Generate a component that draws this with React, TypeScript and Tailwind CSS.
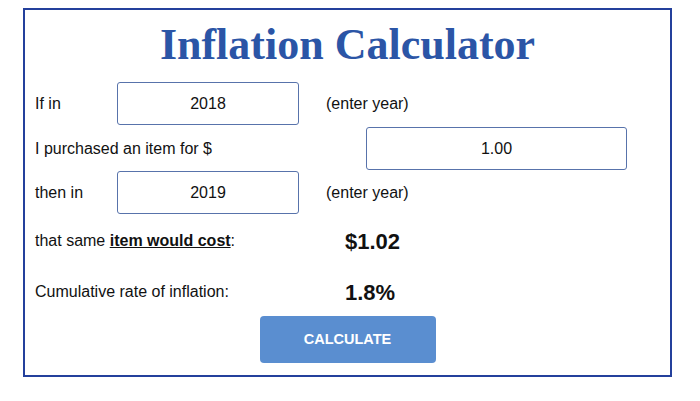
export default function App() {
  const inputCls =
    'h-[43px] border border-[#5873ab] rounded-[3px] bg-white text-center text-[16px] text-[#111] outline-none'

  return (
    <div className="min-h-screen bg-white pt-[8px] font-['Liberation_Sans',Arial,sans-serif] text-[16px] text-[#111]">
      <div className="ml-[23px] w-[649px] h-[369px] border-2 border-[#24409c] pl-[10px] pr-[10px] pt-[10px]">
        {/* Title */}
        <h1 className="text-center font-['Liberation_Serif','Times_New_Roman',serif] font-bold text-[44px] leading-[50px] text-[#2b55a6]">
          Inflation Calculator
        </h1>

        {/* Row 1 */}
        <div className="mt-[12px] flex items-center h-[43px]">
          <span className="w-[82px]">If in</span>
          <input className={`${inputCls} w-[182px]`} defaultValue="2018" />
          <span className="ml-[27px]">(enter year)</span>
        </div>

        {/* Row 2 */}
        <div className="mt-[2px] flex items-center h-[43px]">
          <span className="w-[331px]">I purchased an item for $</span>
          <input className={`${inputCls} w-[261px]`} defaultValue="1.00" />
        </div>

        {/* Row 3 */}
        <div className="mt-[1px] flex items-center h-[43px]">
          <span className="w-[82px]">then in</span>
          <input className={`${inputCls} w-[182px]`} defaultValue="2019" />
          <span className="ml-[27px]">(enter year)</span>
        </div>

        {/* Result */}
        <div className="flex items-center h-[54px]">
          <span className="w-[310px]">
            that same <span className="font-bold underline">item would cost</span>:
          </span>
          <span className="font-bold text-[22px]">$1.02</span>
        </div>

        <div className="flex items-center h-[48px]">
          <span className="w-[310px]">Cumulative rate of inflation:</span>
          <span className="font-bold text-[22px]">1.8%</span>
        </div>

        <div className="flex justify-center">
          <button className="w-[176px] h-[47px] rounded-[4px] bg-[#5a8ed0] text-white font-bold text-[14.5px]">
            CALCULATE
          </button>
        </div>
      </div>
    </div>
  )
}
